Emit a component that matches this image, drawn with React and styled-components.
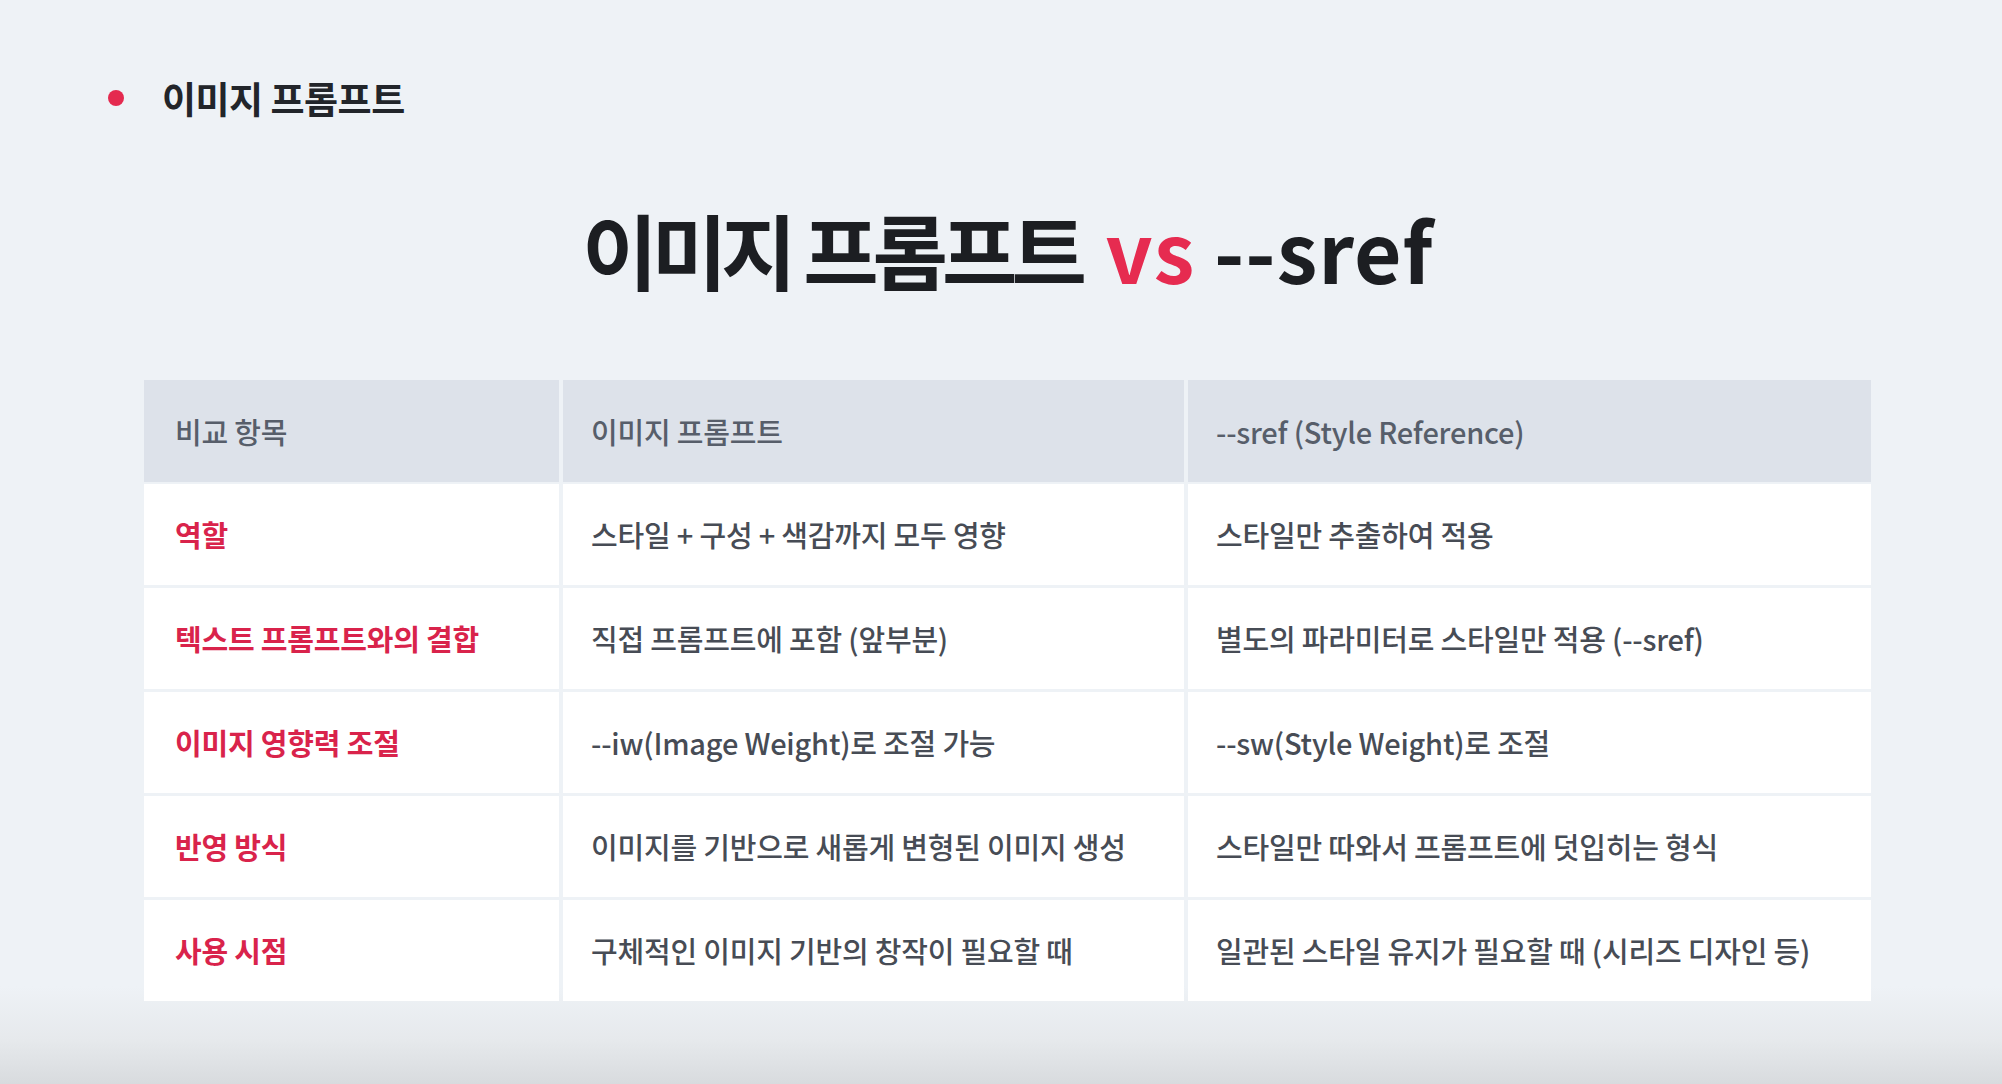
import React from 'react'
import styled, { createGlobalStyle } from 'styled-components'

const GlobalStyle = createGlobalStyle`
  html, body {
    margin: 0;
    padding: 0;
  }
  body {
    width: 2002px;
    height: 1084px;
    overflow: hidden;
    background: linear-gradient(180deg, #eef2f6 0%, #eef2f6 91%, #e6e9ec 96%, #d8dbde 100%);
    font-family: "Noto Sans CJK KR", "Noto Sans", sans-serif;
  }
`;

const Page = styled.div`
  padding: 76px 0 0 0;
`;

const Heading = styled.div`
  display: flex;
  align-items: center;
  gap: 38px;
  padding-left: 108px;
`;

const Dot = styled.span`
  width: 16px;
  height: 16px;
  border-radius: 50%;
  background: #e42a4f;
`;

const HeadingText = styled.h2`
  margin: 0;
  font-size: 37px;
  line-height: 1.2;
  font-weight: 700;
  color: #22252a;
  letter-spacing: -0.5px;
`;

const Title = styled.h1`
  margin: 80px 0 0 0;
  text-align: center;
  font-size: 82px;
  line-height: 1.2;
  font-weight: 700;
  color: #1c1e22;
  padding-left: 14px;
`;

const Hangul = styled.span`
  letter-spacing: -6px;
  margin-right: 6px;
`;

const Latin = styled.span`
  letter-spacing: 1px;
  color: ${p => (p.$accent ? '#e62b50' : 'inherit')};
`;

const Table = styled.div`
  margin: 81px 0 0 144px;
  width: 1727px;
  display: grid;
  grid-template-columns: 415px 621px 1fr;
  grid-auto-rows: 101px;
  gap: 3px 4px;
`;

const Cell = styled.div`
  display: flex;
  align-items: center;
  padding-left: ${p => (p.$first ? 31 : 28)}px;
  background: ${p => (p.$head ? '#dde2ea' : '#ffffff')};
  height: ${p => (p.$head ? 102 : 101)}px;
  font-size: 29px;
  letter-spacing: -0.2px;
  font-weight: ${p => (p.$label ? 700 : 500)};
  color: ${p => (p.$label ? '#d9234b' : p.$head ? '#575e6a' : '#474c55')};
  white-space: nowrap;
`;

const headers = ['비교 항목', '이미지 프롬프트', '--sref (Style Reference)'];

const rows = [
  ['역할', '스타일 + 구성 + 색감까지 모두 영향', '스타일만 추출하여 적용'],
  ['텍스트 프롬프트와의 결합', '직접 프롬프트에 포함 (앞부분)', '별도의 파라미터로 스타일만 적용 (--sref)'],
  ['이미지 영향력 조절', '--iw(Image Weight)로 조절 가능', '--sw(Style Weight)로 조절'],
  ['반영 방식', '이미지를 기반으로 새롭게 변형된 이미지 생성', '스타일만 따와서 프롬프트에 덧입히는 형식'],
  ['사용 시점', '구체적인 이미지 기반의 창작이 필요할 때', '일관된 스타일 유지가 필요할 때 (시리즈 디자인 등)'],
];

const App = () => {
  return (
    <Page>
      <GlobalStyle />
      <Heading>
        <Dot />
        <HeadingText>이미지 프롬프트</HeadingText>
      </Heading>
      <Title>
        <Hangul>이미지 프롬프트</Hangul> <Latin $accent>vs</Latin> <Latin>--sref</Latin>
      </Title>
      <Table>
        {headers.map((h, i) => (
          <Cell key={h} $head $first={i === 0}>{h}</Cell>
        ))}
        {rows.map(row =>
          row.map((text, i) => (
            <Cell key={row[0] + i} $first={i === 0} $label={i === 0}>{text}</Cell>
          ))
        )}
      </Table>
    </Page>
  )
}

export default App;
